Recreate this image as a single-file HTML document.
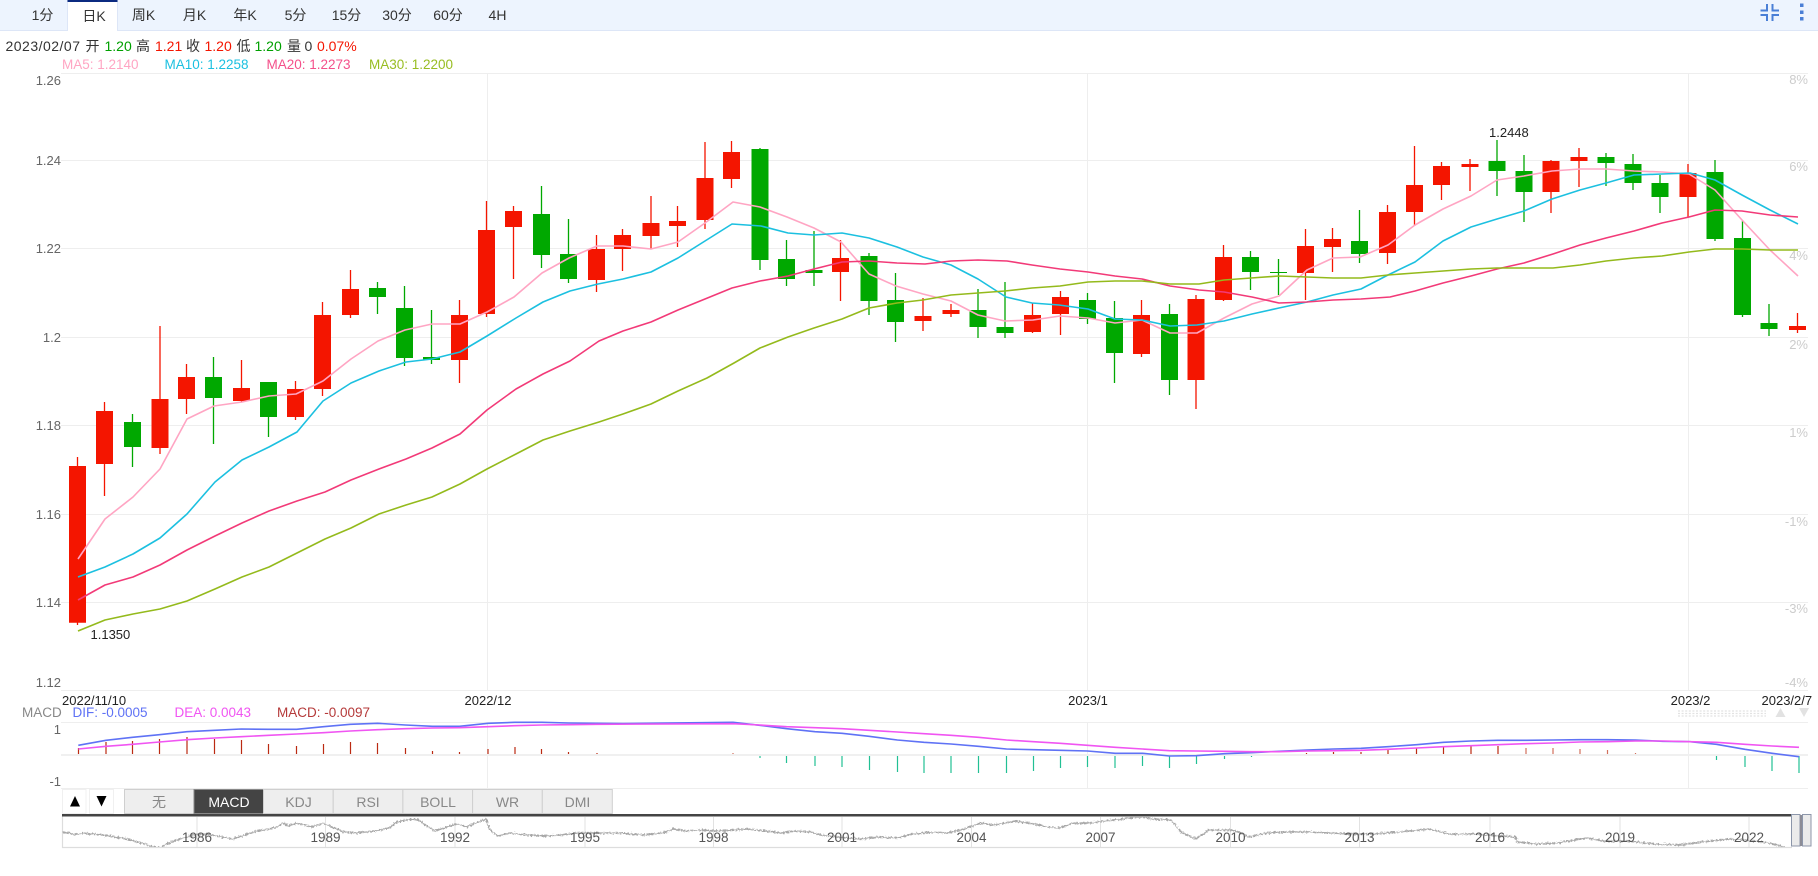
<!DOCTYPE html>
<html lang="zh">
<head>
<meta charset="utf-8">
<title>K</title>
<style>
html,body{margin:0;padding:0;background:#fff;width:1818px;height:876px;overflow:hidden}
svg{display:block;font-family:"Liberation Sans","Noto Sans CJK SC",sans-serif}
.ma{fill:none;stroke-width:1.6;stroke-linejoin:round}
.g{fill:none;stroke:#eeeeee;stroke-width:1}
</style>
</head>
<body>
<svg width="1818" height="876" viewBox="0 0 1818 876" xmlns="http://www.w3.org/2000/svg">
<defs>
<filter id="noise" filterUnits="userSpaceOnUse" x="50" y="805" width="1768" height="60" color-interpolation-filters="sRGB">
<feTurbulence type="fractalNoise" baseFrequency="0.55" numOctaves="2" seed="4"/>
<feDisplacementMap in="SourceGraphic" scale="4" xChannelSelector="R" yChannelSelector="G"/>
</filter>
<clipPath id="navclip"><rect x="62" y="817" width="1730" height="30"/></clipPath>
</defs>

<!-- top tab bar -->
<rect x="0" y="0" width="1818" height="30" fill="#edf4fe"/>
<rect x="0" y="30" width="1818" height="1" fill="#dde6f7"/>
<rect x="67.5" y="0" width="50" height="31" fill="#fff"/>
<path d="M67.5 0V31M117.5 0V31" stroke="#dde6f7" fill="none"/>
<rect x="67.5" y="0" width="50" height="2" fill="#0b2a80"/>
<g font-size="14" fill="#333" text-anchor="middle">
<text x="42.5" y="20">1分</text>
<text x="94" y="21">日K</text>
<text x="143.5" y="20">周K</text>
<text x="194.5" y="20">月K</text>
<text x="245" y="20">年K</text>
<text x="295.5" y="20">5分</text>
<text x="346.5" y="20">15分</text>
<text x="397" y="20">30分</text>
<text x="448" y="20">60分</text>
<text x="497.5" y="20">4H</text>
</g>
<!-- compress icon -->
<path d="M1760.5 10.5H1767V4M1772.5 4V10.5H1779M1760.5 15H1767V21M1772.5 21V15H1779" fill="none" stroke="#4a7fd6" stroke-width="2"/>
<g fill="#4a7fd6"><rect x="1800" y="3.5" width="3.5" height="3.5"/><rect x="1800" y="10.5" width="3.5" height="3.5"/><rect x="1800" y="17" width="3.5" height="3.5"/></g>

<!-- info line -->
<g font-size="14" fill="#333">
<text x="5.5" y="51" textLength="74.5">2023/02/07</text>
<text x="85.5" y="51">开</text>
<text x="104.5" y="51" fill="#00a000">1.20</text>
<text x="136" y="51">高</text>
<text x="155" y="51" fill="#f41500">1.21</text>
<text x="186" y="51">收</text>
<text x="204.5" y="51" fill="#f41500">1.20</text>
<text x="236.5" y="51">低</text>
<text x="254.5" y="51" fill="#00a000">1.20</text>
<text x="287" y="51">量</text>
<text x="304.5" y="51">0</text>
<text x="317" y="51" fill="#f41500">0.07%</text>
</g>
<g font-size="13.5">
<text x="62" y="69" fill="#ffa5c3">MA5: 1.2140</text>
<text x="164.5" y="69" fill="#1cc0e0">MA10: 1.2258</text>
<text x="266.5" y="69" fill="#f4508a">MA20: 1.2273</text>
<text x="369" y="69" fill="#98bd22">MA30: 1.2200</text>
</g>

<!-- grid -->
<path class="g" d="M61 73.5H1808M61 160.5H1808M61 248.5H1808M61 337.5H1808M61 425.5H1808M61 514.5H1808M61 602.5H1808M61 690.5H1808"/>
<path class="g" d="M487.5 74V690M1087.5 74V690M1688.5 74V690M487.5 722V788M1087.5 722V788M1688.5 722V788"/>

<!-- axis labels -->
<g font-size="13" fill="#666" text-anchor="end">
<text x="61" y="85">1.26</text>
<text x="61" y="165">1.24</text>
<text x="61" y="253">1.22</text>
<text x="61" y="342">1.2</text>
<text x="61" y="430">1.18</text>
<text x="61" y="519">1.16</text>
<text x="61" y="607">1.14</text>
<text x="61" y="687">1.12</text>
</g>
<g font-size="13" fill="#cccccc" text-anchor="end">
<text x="1808" y="84">8%</text>
<text x="1808" y="171">6%</text>
<text x="1808" y="260">4%</text>
<text x="1808" y="349">2%</text>
<text x="1808" y="437">1%</text>
<text x="1808" y="526">-1%</text>
<text x="1808" y="613">-3%</text>
<text x="1808" y="687">-4%</text>
</g>

<!-- candles -->
<g fill="none" stroke="#f41500">
<path stroke-width="1.3" d="M77.5 457V625M104.5 402V496M160 326V454M186.5 364V414M241.5 360V402M295.5 381V420M322.5 302V396M350.5 270V318M459.5 300V383M486.5 201V317M513.5 206V279M596.5 235V292M622.5 229V271M651 196V249M677.5 206V247M705 142V229M731.5 141V188M840.5 240V301M923 298V331M951 304V317M1032.5 303V333M1060.5 291V335M1141.5 300V357M1196 295V409M1223.5 245V301M1305.5 229V300M1332.5 228V272M1387.5 205V264M1414.5 146V226M1441.5 162V200M1470 159V191M1551 160V213M1579 148V187M1688 164V217M1797.5 313V333"/>
<path stroke-width="17" d="M77.5 466V622.7M104.5 411V464M160 399V448M186.5 377V399M241.5 388V401M295.5 389V417M322.5 315V389M350.5 289V315M459.5 315V360M486.5 230V314M513.5 211V227M596.5 249V280M622.5 235V249M651 223V236M677.5 221V226M705 178V220M731.5 152V179M840.5 258V272M923 316V321M951 310V314M1032.5 315V332M1060.5 297V314M1141.5 315V354M1196 299V380M1223.5 257V300M1305.5 246V273M1332.5 239V247M1387.5 212V253M1414.5 185V212M1441.5 166V185M1470 164V167M1551 161V192M1579 157V161M1688 173V197M1797.5 326V330"/>
</g>
<g fill="none" stroke="#00a800">
<path stroke-width="1.3" d="M132.5 414V467M213.5 357V444M268.5 382V437M377.5 282V314M404.5 286V366M431.5 310V364M541.5 186V268M568.5 219V283M760 148V270M786.5 240V286M814 231V286M869 253V315M895.5 273V342M978 289V338M1005 282V338M1087.5 293V324M1114.5 301V383M1169.5 304V395M1250.5 251V290M1278.5 259V295M1359.5 210V263M1497 140V196M1524 155V222M1606 153V186M1633 154V190M1660 175V213M1715 160V241M1742.5 221V317M1769 304V336"/>
<path stroke-width="17" d="M132.5 422V447M213.5 377V398M268.5 382V417M377.5 288V297M404.5 308V358M431.5 357V360M541.5 214V255M568.5 254V279M760 149V260M786.5 259V279M814 270V273M869 256V301M895.5 300V322M978 310V327M1005 327V333M1087.5 300V319M1114.5 318V353M1169.5 314V380M1250.5 257V272M1278.5 272V273M1359.5 241V254M1497 161V171M1524 171V192M1606 157V163M1633 164V183M1660 183V197M1715 172V239M1742.5 238V315M1769 323V329"/>
</g>

<!-- moving averages -->
<polyline class="ma" stroke="#ffa5c3" points="78,559 105,519 133,497 160,469 187,419 214,406 242,402 269,396 296,394 323,381 351,359 378,341 405,330 432,324 460,324 487,312 514,297 542,273 569,258 597,246 623,246 651,249 678,242 705,223 733,202 760,207 787,217 814,228 841,242 869,274 896,286 923,294 951,301 978,315 1005,321 1033,320 1060,316 1088,318 1115,323 1142,320 1170,333 1197,333 1224,318 1252,304 1279,296 1307,270 1333,258 1360,257 1388,245 1415,225 1443,209 1471,196 1497,180 1524,176 1552,171 1580,169 1606,169 1634,171 1662,172 1689,174 1715,190 1742,220 1770,250 1798,276"/>
<polyline class="ma" stroke="#1cc0e0" points="78,577 105,567 133,554 160,538 187,514 215,482 242,460 269,447 297,432 323,401 351,383 379,371 406,362 432,359 460,352 487,336 516,318 543,302 570,291 598,284 623,279 651,272 678,258 705,241 732,224 761,226 788,233 814,235 842,233 869,238 897,247 923,257 951,265 978,279 1006,297 1032,303 1059,305 1088,309 1115,319 1142,320 1170,326 1197,325 1224,321 1252,314 1279,308 1307,302 1333,295 1361,289 1388,275 1415,262 1443,241 1471,227 1497,219 1524,211 1552,199 1580,190 1606,183 1634,175 1662,174 1690,173 1715,180 1742,195 1770,210 1798,224"/>
<polyline class="ma" stroke="#f23a78" points="78,600 105,585 133,577 160,565 187,550 215,536 242,523 269,511 297,501 325,492 351,480 379,469 406,459 432,448 460,434 487,410 516,389 543,374 570,361 599,341 623,331 651,322 678,310 705,299 732,288 760,281 788,276 814,269 842,262 869,261 897,263 925,264 951,261 978,260 1007,261 1032,265 1060,269 1088,272 1115,276 1142,279 1170,286 1199,290 1224,292 1252,297 1279,303 1307,302 1333,300 1361,299 1390,297 1415,291 1443,283 1471,276 1497,269 1524,263 1553,254 1580,245 1606,238 1634,231 1662,223 1689,217 1715,210 1742,211 1770,215 1798,217"/>
<polyline class="ma" stroke="#94ba1c" points="78,631 105,620 133,614 160,609 187,601 215,589 242,577 269,567 297,553 325,539 351,528 379,514 406,505 432,497 460,484 487,469 516,454 543,440 570,431 599,422 623,414 651,404 678,391 707,378 734,363 760,348 788,337 814,328 842,319 869,308 897,303 923,300 951,295 978,293 1005,291 1032,288 1060,286 1088,282 1115,281 1142,281 1170,284 1199,284 1224,280 1251,278 1279,276 1307,277 1333,278 1361,278 1388,275 1415,273 1443,271 1471,269 1497,268 1524,268 1553,268 1580,265 1606,261 1634,258 1662,256 1689,252 1715,249 1742,249 1770,250 1798,250"/>

<text x="1489" y="137" font-size="13" fill="#222">1.2448</text>
<text x="90.5" y="639" font-size="13" fill="#222">1.1350</text>

<!-- date row -->
<g font-size="13" fill="#222">
<text x="62" y="705">2022/11/10</text>
<text x="488" y="705" text-anchor="middle">2022/12</text>
<text x="1088" y="705" text-anchor="middle">2023/1</text>
<text x="1690.5" y="705" text-anchor="middle">2023/2</text>
<text x="1761.5" y="705">2023/2/7</text>
</g>

<!-- macd legend -->
<g font-size="13.5">
<text x="22" y="717" fill="#888">MACD</text>
<text x="72.5" y="717" fill="#5f72f5">DIF: -0.0005</text>
<text x="174.5" y="717" fill="#f055f2">DEA: 0.0043</text>
<text x="277" y="717" fill="#b53a3a">MACD: -0.0097</text>
</g>
<path d="M1678 711H1766M1678 713.5H1766M1678 716H1766" stroke="#e2e2e2" stroke-width="1.2" stroke-dasharray="2 1.6" fill="none"/>
<path d="M1775.500 717L1780.500 708L1785.500 717zM1799 708L1804 717L1809 708z" fill="#e2e2e2"/>

<!-- macd panel -->
<path class="g" d="M61 722.5H1808M61 788.5H1808"/>
<path d="M61 755H1808" stroke="#f0f0f0" stroke-width="2" fill="none"/>
<g font-size="13" fill="#666" text-anchor="end">
<text x="61" y="734">1</text>
<text x="61" y="786">-1</text>
</g>
<path fill="none" stroke="#bb2a12" stroke-width="1.2" d="M78.5 748V754M106 742V754M132.5 741V754M159.5 739V754M187 737V754M214.5 739V754M241.5 740V754M268.5 744V754M296.5 746V754M323.5 744V754M350.5 742V754M377.5 743V754M405.5 748V754M432.5 751V754M459.5 752V754M488 749V754M515 747V754M541.5 749V754M568.5 752V754M597 753V754M1306.5 753V754M1333.5 752V754M1361 752V754M1388 750V754M1416.5 748V754M1443.5 746V754M1471 745V754M1498 746V754"/>
<path fill="none" stroke="#d2705c" stroke-width="1.2" d="M733 753V754M1526 748V754M1553 748V754M1580 749V754M1607.5 750V754M1635.5 753V754"/>
<path fill="none" stroke="#22c094" stroke-width="1.2" d="M760 756V758M786.5 756V763M815 756V766M842 756V767M869.5 756V770M897.5 756V772M924 756V773M951 756V773M978.5 756V773M1006.5 756V773M1033.5 756V771M1060.5 756V768M1087.5 756V767M1115 756V768M1142.5 756V766M1169.5 756V768M1196.5 756V764M1224.5 756V759M1251.5 756V757M1716.5 756V760M1745 756V767M1772 756V771M1799 756V773"/>
<polyline class="ma" stroke="#5f72f5" points="78.3,745.3 106,740.3 132.5,737.3 159.4,734.7 187,731.7 214.7,730.3 241.2,729 268.9,729.3 296.6,729.3 323.5,726.7 350.3,724.3 377.6,723.3 405.3,725 432.6,726.3 459.5,726.3 488,723.3 514.8,722.3 541.7,722.3 568.6,723 596.3,723.3 623,723.6 733,722.3 759.7,725.3 786.6,728.7 815,731.7 842,733.3 869,736.3 897.4,740 924,742.3 951,744 978.4,746.3 1006.5,749 1033.4,749.7 1060.3,750.3 1087.5,751 1115.2,753.3 1142.5,753.3 1169.4,756 1196.3,755.7 1224.5,753.7 1251.4,752.7 1279,751.3 1306.8,750 1333.6,749 1361,748.3 1387.8,746.7 1416.7,744.7 1443.6,742.3 1470.9,741 1497.7,740.3 1525.8,740.3 1553,740 1580,739.7 1607.3,739.7 1635.3,740 1662.6,741.3 1690,741.7 1716.4,744.3 1744.9,749.3 1772.2,753.3 1799,756.7"/>
<polyline class="ma" stroke="#f055f2" points="78.3,749 106,746.3 132.5,744.3 159.4,742 187,739.7 214.7,738 241.2,736.7 268.9,735.3 296.6,734 323.5,732.7 350.3,731 377.6,729.7 405.3,728.7 432.6,728 459.5,727.7 488,726.7 514.8,725.7 541.7,725 568.6,724.7 596.3,724.3 733,723.7 759.7,725 786.6,726.7 815,727.7 842,728.7 869,730.3 897.4,732 924,733.7 951,735.3 978.4,737.3 1006.5,740 1033.4,741.7 1060.3,743.3 1087.5,745.3 1115.2,747.3 1142.5,749 1169.4,750.7 1196.3,751 1224.5,751.3 1251.4,751.7 1279,751.7 1306.8,751 1333.6,750.7 1361,750.3 1387.8,749.3 1416.7,748 1443.6,746.7 1470.9,745.7 1497.7,744.7 1525.8,743.7 1553,743 1580,742 1607.3,741.7 1635.3,741 1662.6,741 1690,741.7 1716.4,742.3 1744.9,744.3 1772.2,746 1799,747.3"/>

<!-- indicator buttons -->
<rect x="62.5" y="789.5" width="23.5" height="24" fill="#fff" stroke="#f0f0f0"/>
<rect x="89.5" y="789.5" width="24" height="24" fill="#fff" stroke="#f0f0f0"/>
<path d="M70 806.5L75 796L80 806.5zM96.5 796L101.5 806.5L106.5 796z" fill="#000"/>
<g stroke="#cfcfcf" fill="#eeeeee">
<rect x="124.5" y="789.5" width="69.5" height="24"/>
<rect x="194" y="789.5" width="69.5" height="24" fill="#444" stroke="#888"/>
<rect x="263.5" y="789.5" width="69.7" height="24"/>
<rect x="333.2" y="789.5" width="69.7" height="24"/>
<rect x="402.9" y="789.5" width="69.7" height="24"/>
<rect x="472.6" y="789.5" width="69.7" height="24"/>
<rect x="542.3" y="789.5" width="70" height="24"/>
</g>
<g font-size="14" fill="#888" text-anchor="middle">
<text x="159" y="807">无</text>
<text x="229" y="807" fill="#fff">MACD</text>
<text x="298.5" y="807">KDJ</text>
<text x="368" y="807">RSI</text>
<text x="438" y="807">BOLL</text>
<text x="507.5" y="807">WR</text>
<text x="577.5" y="807">DMI</text>
</g>

<!-- navigator -->
<path d="M62.5 816V847.5H1792" fill="none" stroke="#dddddd" stroke-width="1.2"/>
<path d="M197 817V847M325.5 817V847M455 817V847M585 817V847M713.5 817V847M842 817V847M971.5 817V847M1100.5 817V847M1230.5 817V847M1359.5 817V847M1490 817V847M1620 817V847M1749 817V847" fill="none" stroke="#e2e2e2"/>
<g clip-path="url(#navclip)">
<polyline filter="url(#noise)" fill="none" stroke="#a8a8a8" stroke-width="1.5" points="63,832 69,833 75,835 83,833 91,834 103,835 115,837 127,839 138,842 146,844 152,847 162,848 164,845 174,841 184,838 194,835 206,834 217,836 233,839 245,835 257,831 269,829 277,827 283,823 289,826 297,823 304,825 312,827 323,823 332,827 344,832 356,833 368,832 380,830 389,828 397,822 407,820 417,819 425,825 435,831 447,827 457,824 467,827 478,822 486,819 490,830 498,836 510,833 526,835 546,836 561,835 577,833 593,833 605,833 620,833 643,835 663,833 673,829 687,831 699,830 719,831 746,829 766,831 782,833 794,831 810,832 821,835 837,837 861,839 877,837 897,838 912,834 936,832 948,833 964,829 980,823 995,825 1015,821 1035,824 1047,827 1059,828 1074,823 1090,823 1106,821 1130,818 1142,817 1154,819 1171,820 1181,832 1195,839 1205,833 1208,830 1220,830 1232,830 1240,833 1249,837 1267,833 1287,832 1307,832 1330,833 1350,834 1374,834 1398,832 1429,829 1449,834 1473,834 1501,836 1516,837 1517,842 1536,844 1556,843 1588,838 1603,841 1627,841 1655,844 1678,845 1702,842 1730,839 1754,841 1769,843 1785,847"/>
</g>
<rect x="62" y="814" width="1730" height="2.5" fill="#444"/>
<g font-size="13.5" fill="#555" text-anchor="middle">
<text x="197" y="842">1986</text>
<text x="325.5" y="842">1989</text>
<text x="455" y="842">1992</text>
<text x="585" y="842">1995</text>
<text x="713.5" y="842">1998</text>
<text x="842" y="842">2001</text>
<text x="971.5" y="842">2004</text>
<text x="1100.5" y="842">2007</text>
<text x="1230.5" y="842">2010</text>
<text x="1359.5" y="842">2013</text>
<text x="1490" y="842">2016</text>
<text x="1620" y="842">2019</text>
<text x="1749" y="842">2022</text>
</g>
<rect x="1791.5" y="814.5" width="8.5" height="31.5" fill="#ebebeb" stroke="#8c96aa"/>
<rect x="1800" y="815" width="2.5" height="31" fill="#8c8c96"/>
<rect x="1802.5" y="814.5" width="8.5" height="31.5" fill="#ebebeb" stroke="#8c96aa"/>
</svg>
</body>
</html>
